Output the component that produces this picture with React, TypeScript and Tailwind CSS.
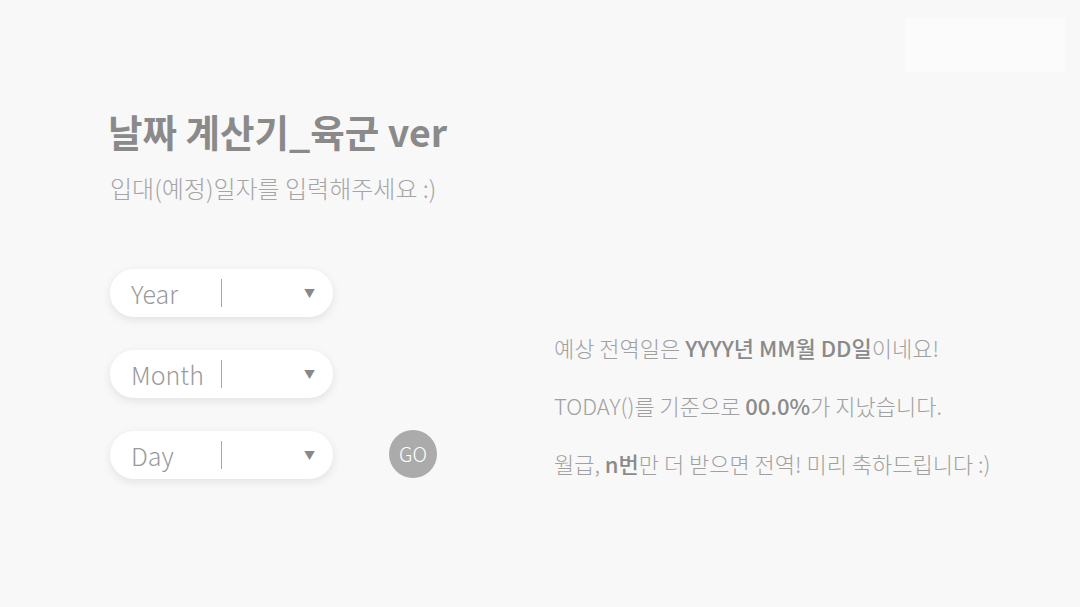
const font = { fontFamily: '"Noto Sans CJK KR", "Noto Sans", sans-serif' };

function Picker({ label }: { label: string }) {
  return (
    <div className="flex h-12 w-[223px] items-center rounded-full bg-white pl-[21px] pr-[18px] shadow-[0_3px_10px_rgba(0,0,0,0.09)]">
      <span className="w-[90px] text-[25px] font-light leading-none text-[#9a9a9a]">{label}</span>
      <span className="h-7 w-px bg-[#a8a8a8]" />
      <span className="ml-auto text-[11px] leading-none text-[#888]">▼</span>
    </div>
  );
}

export default function App() {
  return (
    <div style={font} className="relative flex h-[607px] w-[1080px] overflow-hidden bg-[#f8f8f8]">
      <div className="absolute right-[15px] top-[18px] h-[54px] w-[160px] bg-white/40" />
      <div className="flex w-[437px] shrink-0 flex-col pl-[108px] pt-[106px]">
        <h1 className="whitespace-nowrap text-[37.5px] font-bold leading-[50px] text-[#8a8a8a]">날짜 계산기_육군 ver</h1>
        <p className="mt-[15px] whitespace-nowrap pl-[2px] text-[24px] font-light leading-[34px] text-[#a5a5a5]">입대(예정)일자를 입력해주세요 :)</p>
        <div className="mt-[64px] flex items-end gap-[56px] pl-[2px]">
          <div className="flex flex-col gap-[33px]">
            <Picker label="Year" />
            <Picker label="Month" />
            <Picker label="Day" />
          </div>
          <div className="mb-[1px] flex h-12 w-12 shrink-0 items-center justify-center rounded-full bg-[#ababab] text-[20px] font-light text-white">GO</div>
        </div>
      </div>
      <div className="flex flex-col gap-[26px] pl-[117px] pt-[331px] text-[22px] font-light leading-[32px] text-[#a0a0a0]">
        <p>
          예상 전역일은 <b className="font-medium text-[#8a8a8a]">YYYY년 MM월 DD일</b>이네요!
        </p>
        <p>
          TODAY()를 기준으로 <b className="font-medium text-[#8a8a8a]">00.0%</b>가 지났습니다.
        </p>
        <p>
          월급, <b className="font-medium text-[#8a8a8a]">n번</b>만 더 받으면 전역! 미리 축하드립니다 :)
        </p>
      </div>
    </div>
  );
}
